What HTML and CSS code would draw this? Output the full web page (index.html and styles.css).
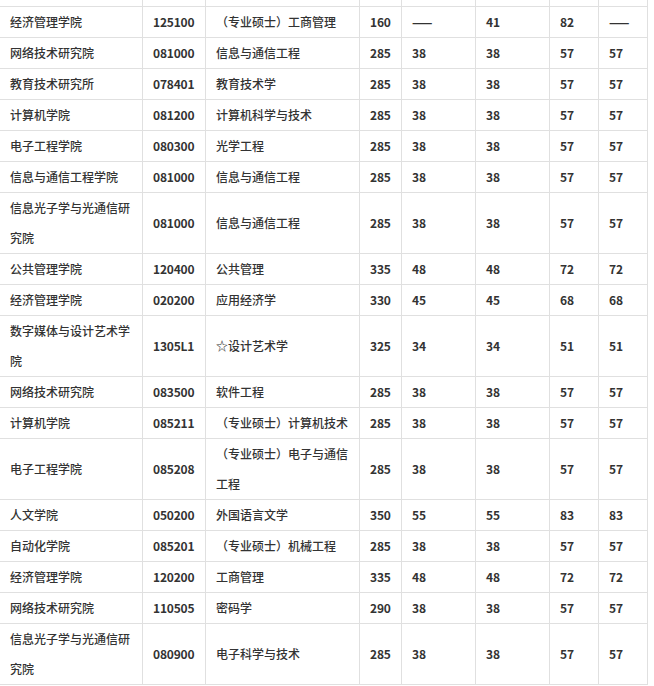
FILE: index.html
```html
<!DOCTYPE html>
<html lang="zh-CN">
<head>
<meta charset="utf-8">
<title>招生分数线</title>
<link rel="stylesheet" href="styles.css">
</head>
<body>
<table class="score-table">
  <colgroup>
    <col class="c-school"><col class="c-code"><col class="c-major"><col class="c-total">
    <col class="c-s1"><col class="c-s2"><col class="c-s3"><col class="c-s4">
  </colgroup>
  <tbody>
    <tr><td></td><td></td><td></td><td></td><td></td><td></td><td></td><td></td></tr>
    <tr><td>经济管理学院</td><td class="num">125100</td><td>（专业硕士）工商管理</td><td class="num">160</td><td class="num">——</td><td class="num">41</td><td class="num">82</td><td class="num">——</td></tr>
    <tr><td>网络技术研究院</td><td class="num">081000</td><td>信息与通信工程</td><td class="num">285</td><td class="num">38</td><td class="num">38</td><td class="num">57</td><td class="num">57</td></tr>
    <tr><td>教育技术研究所</td><td class="num">078401</td><td>教育技术学</td><td class="num">285</td><td class="num">38</td><td class="num">38</td><td class="num">57</td><td class="num">57</td></tr>
    <tr><td>计算机学院</td><td class="num">081200</td><td>计算机科学与技术</td><td class="num">285</td><td class="num">38</td><td class="num">38</td><td class="num">57</td><td class="num">57</td></tr>
    <tr><td>电子工程学院</td><td class="num">080300</td><td>光学工程</td><td class="num">285</td><td class="num">38</td><td class="num">38</td><td class="num">57</td><td class="num">57</td></tr>
    <tr><td>信息与通信工程学院</td><td class="num">081000</td><td>信息与通信工程</td><td class="num">285</td><td class="num">38</td><td class="num">38</td><td class="num">57</td><td class="num">57</td></tr>
    <tr><td>信息光子学与光通信研究院</td><td class="num">081000</td><td>信息与通信工程</td><td class="num">285</td><td class="num">38</td><td class="num">38</td><td class="num">57</td><td class="num">57</td></tr>
    <tr><td>公共管理学院</td><td class="num">120400</td><td>公共管理</td><td class="num">335</td><td class="num">48</td><td class="num">48</td><td class="num">72</td><td class="num">72</td></tr>
    <tr><td>经济管理学院</td><td class="num">020200</td><td>应用经济学</td><td class="num">330</td><td class="num">45</td><td class="num">45</td><td class="num">68</td><td class="num">68</td></tr>
    <tr><td>数字媒体与设计艺术学院</td><td class="num">1305L1</td><td>☆设计艺术学</td><td class="num">325</td><td class="num">34</td><td class="num">34</td><td class="num">51</td><td class="num">51</td></tr>
    <tr><td>网络技术研究院</td><td class="num">083500</td><td>软件工程</td><td class="num">285</td><td class="num">38</td><td class="num">38</td><td class="num">57</td><td class="num">57</td></tr>
    <tr><td>计算机学院</td><td class="num">085211</td><td>（专业硕士）计算机技术</td><td class="num">285</td><td class="num">38</td><td class="num">38</td><td class="num">57</td><td class="num">57</td></tr>
    <tr><td>电子工程学院</td><td class="num">085208</td><td>（专业硕士）电子与通信工程</td><td class="num">285</td><td class="num">38</td><td class="num">38</td><td class="num">57</td><td class="num">57</td></tr>
    <tr><td>人文学院</td><td class="num">050200</td><td>外国语言文学</td><td class="num">350</td><td class="num">55</td><td class="num">55</td><td class="num">83</td><td class="num">83</td></tr>
    <tr><td>自动化学院</td><td class="num">085201</td><td>（专业硕士）机械工程</td><td class="num">285</td><td class="num">38</td><td class="num">38</td><td class="num">57</td><td class="num">57</td></tr>
    <tr><td>经济管理学院</td><td class="num">120200</td><td>工商管理</td><td class="num">335</td><td class="num">48</td><td class="num">48</td><td class="num">72</td><td class="num">72</td></tr>
    <tr><td>网络技术研究院</td><td class="num">110505</td><td>密码学</td><td class="num">290</td><td class="num">38</td><td class="num">38</td><td class="num">57</td><td class="num">57</td></tr>
    <tr><td>信息光子学与光通信研究院</td><td class="num">080900</td><td>电子科学与技术</td><td class="num">285</td><td class="num">38</td><td class="num">38</td><td class="num">57</td><td class="num">57</td></tr>
  </tbody>
</table>
</body>
</html>
```

FILE: styles.css
```css
html, body {
  margin: 0;
  padding: 0;
  background: #fff;
}

body {
  font-family: "Noto Sans CJK SC", "Microsoft YaHei", sans-serif;
  font-size: 12px;
  color: #333;
}

.score-table {
  border-collapse: collapse;
  table-layout: fixed;
  width: 649px;
  margin: -25px 0 0 -1px;
}

.score-table td {
  border: 1px solid #e0e0e0;
  padding: 0 10px;
  line-height: 30px;
  height: 30px;
  vertical-align: middle;
  text-align: left;
  font-weight: 500;
}

.c-school { width: 143px; }
.c-code { width: 63px; }
.c-major { width: 154px; }
.c-total { width: 42px; }
.c-s1 { width: 74px; }
.c-s2 { width: 74px; }
.c-s3 { width: 49px; }
.c-s4 { width: 49px; }

.score-table td.num {
  font-weight: bold;
  white-space: nowrap;
  padding-right: 0;
  letter-spacing: -0.2px;
}
```
